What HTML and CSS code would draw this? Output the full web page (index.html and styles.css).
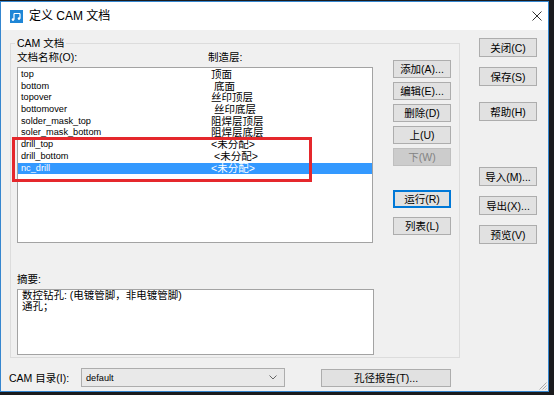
FILE: index.html
```html
<!DOCTYPE html>
<html lang="zh-CN">
<head>
  <meta charset="UTF-8">
  <title>定义 CAM 文档</title>
  <link rel="stylesheet" href="styles.css">
</head>
<body>
  <div class="window">
    <!-- Title bar -->
    <div class="titlebar">
      <svg class="app-icon" width="13" height="13" viewBox="0 0 13 13">
        <rect width="13" height="13" fill="#1f86d6"/>
        <path d="M4 3.5h6M4 3.5v6M10 3.5v5" stroke="#fff" stroke-width="1.2" fill="none"/>
        <circle cx="3" cy="9.6" r="1.3" fill="#fff"/>
        <circle cx="9" cy="8.6" r="1.3" fill="#fff"/>
      </svg>
      <span class="title">定义 CAM 文档</span>
      <svg class="close" width="10" height="10" viewBox="0 0 10 10">
        <path d="M0.5 0.5L9.5 9.5M9.5 0.5L0.5 9.5" stroke="#333" stroke-width="1"/>
      </svg>
    </div>

    <div class="content">
      <div class="main">
        <fieldset class="group">
          <legend>CAM 文档</legend>
          <div class="group-body">
            <div class="docs">
              <div class="cols-head"><span>文档名称(O):</span><span>制造层:</span></div>
              <div class="list">
                <div class="row"><span>top</span><span class="layer">顶面</span></div>
                <div class="row"><span>bottom</span><span class="layer ind">底面</span></div>
                <div class="row"><span>topover</span><span class="layer">丝印顶层</span></div>
                <div class="row"><span>bottomover</span><span class="layer ind">丝印底层</span></div>
                <div class="row"><span>solder_mask_top</span><span class="layer">阻焊层顶层</span></div>
                <div class="row"><span>soler_mask_bottom</span><span class="layer">阻焊层底层</span></div>
                <div class="row"><span>drill_top</span><span class="layer">&lt;未分配&gt;</span></div>
                <div class="row"><span>drill_bottom</span><span class="layer ind">&lt;未分配&gt;</span></div>
                <div class="row selected"><span>nc_drill</span><span class="layer">&lt;未分配&gt;</span></div>
              </div>
              <div class="label">摘要:</div>
              <div class="summary">
                <div>数控钻孔: (电镀管脚，非电镀管脚)</div>
                <div>通孔；</div>
              </div>
            </div>
            <div class="tools">
              <button class="btn">添加(A)...</button>
              <button class="btn">编辑(E)...</button>
              <button class="btn">删除(D)</button>
              <button class="btn">上(U)</button>
              <button class="btn disabled">下(W)</button>
              <button class="btn focused run">运行(R)</button>
              <button class="btn list-btn">列表(L)</button>
            </div>
          </div>
        </fieldset>

        <div class="side">
          <button class="btn tall">关闭(C)</button>
          <button class="btn tall">保存(S)</button>
          <button class="btn tall help">帮助(H)</button>
          <button class="btn tall import">导入(M)...</button>
          <button class="btn tall">导出(X)...</button>
          <button class="btn tall">预览(V)</button>
        </div>
      </div>

      <div class="footer">
        <span class="dir-label">CAM 目录(I):</span>
        <div class="combo">
          <span>default</span>
          <svg width="8" height="5" viewBox="0 0 8 5"><path d="M0.5 0.5L4 4L7.5 0.5" stroke="#666" fill="none"/></svg>
        </div>
        <button class="btn report">孔径报告(T)...</button>
      </div>
    </div>

    <!-- annotation box drawn over the list -->
    <div class="mark"></div>
    <svg class="grip" width="9" height="9" viewBox="0 0 9 9">
      <path d="M8.5 1.5L1.5 8.5M8.5 4.5L4.5 8.5M8.5 7.5L7.5 8.5" stroke="#a8a8a8" stroke-width="1"/>
    </svg>
  </div>
</body>
</html>
```

FILE: styles.css
```css
/* Page */
body {
  margin: 0;
  padding: 1px 0 0 0;
  background: #1b1b1d;
  font-family: "Liberation Sans", "Noto Sans CJK SC", sans-serif;
  color: #000;
}

/* Window frame */
.window {
  position: relative;
  width: 549px;
  height: 391px;
  box-sizing: border-box;
  border: 1px solid #3586cf;
  background: #f0f0f0;
}

.titlebar {
  display: flex;
  align-items: center;
  height: 28px;
  padding: 0 6px 0 9px;
  background: #fff;
}

.app-icon {
  flex: none;
}

.title {
  margin-left: 6px;
  font-size: 12px;
  line-height: 14px;
  flex: 1;
}

.close {
  flex: none;
}

/* Content */
.content {
  padding: 7px 0 0 9px;
  font-size: 10.5px;
}

.main {
  display: flex;
  gap: 19px;
}

.group {
  margin: 0;
  width: 450px;
  min-width: 0;
  box-sizing: border-box;
  padding: 0 7px 2px 6px;
  border: 1px solid #dcdcdc;
}

.group legend {
  padding: 0 2px;
  margin-left: -2px;
  font-size: 10.5px;
  line-height: 13px;
}

.group-body {
  display: flex;
  gap: 19px;
}

.docs {
  width: 357px;
  display: flex;
  flex-direction: column;
}

.cols-head {
  display: grid;
  grid-template-columns: 191px 1fr;
  margin-top: 1px;
  line-height: 13px;
}

/* List box */
.list {
  margin-top: 3px;
  height: 176px;
  width: 356px;
  box-sizing: border-box;
  border: 1px solid #a3a3a3;
  background: #fff;
  padding-top: 1px;
}

.row {
  display: grid;
  grid-template-columns: 190px 1fr;
  height: 11.7px;
  line-height: 11.7px;
  padding-left: 3px;
  font-size: 9.2px;
  white-space: nowrap;
}

.row .layer {
  font-size: 10.5px;
}

.row .ind {
  padding-left: 3px;
}

.row.selected {
  background: #3399ff;
  color: #fff;
}

.label {
  margin-top: 30px;
  line-height: 13px;
}

.summary {
  margin-top: 3px;
  height: 66px;
  box-sizing: border-box;
  border: 1px solid #a3a3a3;
  background: #fff;
  padding: 0 4px;
  line-height: 11px;
}

/* Buttons */
.btn {
  display: block;
  width: 58px;
  height: 18px;
  padding: 0;
  border: 1px solid #adadad;
  background: #e1e1e1;
  font-family: "Liberation Sans", "Noto Sans CJK SC", sans-serif;
  font-size: 10.5px;
  line-height: 14px;
  color: #000;
  white-space: nowrap;
}

.btn.disabled {
  background: #cccccc;
  border-color: #bfbfbf;
  color: #838383;
}

.btn.focused {
  border-color: #0078d7;
  box-shadow: inset 0 0 0 1px #0078d7;
}

.tools {
  display: flex;
  flex-direction: column;
  gap: 4px;
  padding-top: 10px;
}

.tools .run {
  margin-top: 20px;
}

.tools .list-btn {
  margin-top: 5px;
}

.side {
  display: flex;
  flex-direction: column;
  gap: 10px;
  padding-top: 1px;
}

.btn.tall {
  height: 19px;
}

.side .help {
  margin-top: 6px;
}

.side .import {
  margin-top: 36px;
}

/* Footer row */
.footer {
  display: flex;
  align-items: center;
  margin-top: 10px;
  height: 19px;
}

.dir-label {
  width: 72px;
  flex: none;
  margin-left: -1px;
}

.combo {
  width: 204px;
  height: 19px;
  box-sizing: border-box;
  border: 1px solid #adadad;
  background: #e9e9e9;
  display: flex;
  align-items: center;
  justify-content: space-between;
  padding: 0 7px 0 4px;
  font-size: 9.2px;
}

.btn.report {
  width: 130px;
  margin-left: 36px;
}

/* Overlays */
.mark {
  position: absolute;
  left: 11px;
  top: 135px;
  width: 300px;
  height: 45px;
  box-sizing: border-box;
  border: 3px solid #e5282c;
}

.grip {
  position: absolute;
  right: 1px;
  bottom: 1px;
}
```
